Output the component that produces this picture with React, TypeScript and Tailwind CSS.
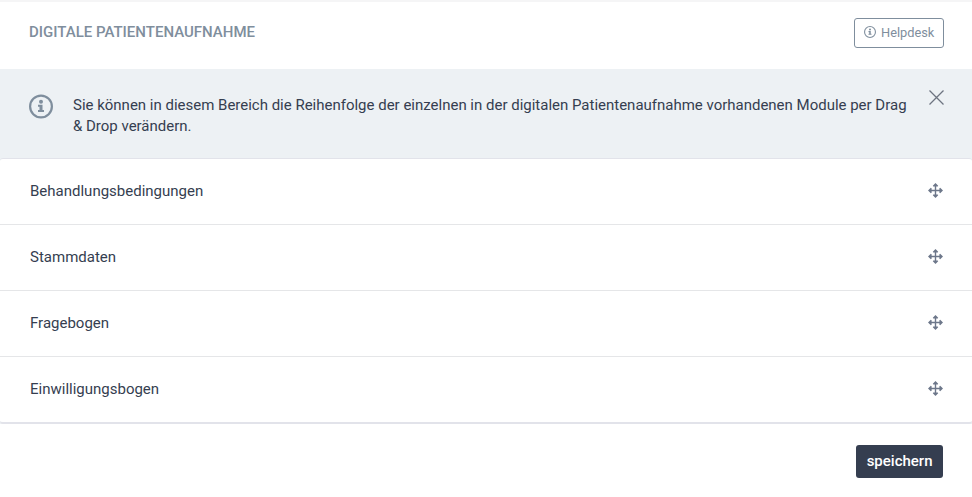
// Réglages du module « Digitale Patientenaufnahme » : liste des modules
// réordonnables par glisser-déposer, bandeau d'aide et bouton de sauvegarde.

import { useState } from 'react'

const MODULES = ['Behandlungsbedingungen', 'Stammdaten', 'Fragebogen', 'Einwilligungsbogen']

// « i » cerclé, avec empattements.
function InfoIcon({ className }: { className: string }) {
  return (
    <svg className={className} viewBox="0 0 24 24" fill="currentColor" aria-hidden="true">
      <circle cx="12" cy="12" r="10.9" fill="none" stroke="currentColor" strokeWidth="2.2" />
      <circle cx="12" cy="7.2" r="2" />
      <path d="M9 10.2h4.5v5.2h1.5v2.1H9v-2.1h1.5v-3.1H9z" />
    </svg>
  )
}

// Poignée de déplacement : quatre flèches.
function MoveIcon() {
  return (
    <svg className="size-[15px]" viewBox="0 0 15 15" fill="currentColor" aria-hidden="true">
      <path d="M6.8 2h1.4v11H6.8zM2 6.8h11v1.4H2z" />
      <path d="M7.5 0 10.2 2.8 9.7 3.6H5.3L4.8 2.8zM7.5 15l2.7-2.8-.5-.8H5.3l-.5.8zM0 7.5l2.8-2.7.8.5v4.4l-.8.5zM15 7.5l-2.8-2.7-.8.5v4.4l.8.5z" />
    </svg>
  )
}

export default function App() {
  const [modules, setModules] = useState(MODULES)
  const [dragged, setDragged] = useState<string | null>(null)
  const [showInfo, setShowInfo] = useState(true)

  // Insère le module déplacé à la place de celui sur lequel on le dépose.
  function drop(target: string) {
    if (!dragged || dragged === target) return
    const index = modules.indexOf(target)
    const next = modules.filter((m) => m !== dragged)
    next.splice(index, 0, dragged)
    setModules(next)
    setDragged(null)
  }

  return (
    <div className="h-[497px] border-t-2 border-[#f5f5f6] bg-white font-[Roboto,sans-serif] text-[15px] text-[#353e50]">
      <header className="flex h-[67px] items-start justify-between pt-4 pr-7 pl-[29px]">
        <h1 className="pt-[3px] leading-[22px] font-medium text-[#7f8e9d]">DIGITALE PATIENTENAUFNAHME</h1>
        <button className="flex h-[30px] w-[90px] items-center gap-[5px] rounded-[3px] border border-[#7f8e9d] pl-[9px] text-[12.8px] text-[#7f8e9d]">
          <InfoIcon className="mb-0.5 size-3" />
          Helpdesk
        </button>
      </header>

      <div className="bg-[#edf1f4]">
        {showInfo && (
          <div className="flex h-[89px] items-start pr-7 pl-[29px]">
            <InfoIcon className="mt-[25px] mr-5 h-[25px] w-6 shrink-0 text-[#7f8e9d]" />
            <p className="mt-[26px] flex-1 text-[14.99px] leading-[21px]">
              Sie können in diesem Bereich die Reihenfolge der einzelnen in der digitalen
              Patientenaufnahme vorhandenen Module per Drag<br />& Drop verändern.
            </p>
            <button className="mt-[21px]" aria-label="Schließen" onClick={() => setShowInfo(false)}>
              <svg className="size-[15px] text-[#6d7480]" viewBox="0 0 15 15" stroke="currentColor" strokeWidth="1.3">
                <path d="M.5.5l14 14M14.5.5l-14 14" />
              </svg>
            </button>
          </div>
        )}

        <ul className="rounded-[3px] border-t border-b-2 border-[#e2e3ea] bg-white">
          {modules.map((name) => (
            <li
              key={name}
              className="flex h-[66px] items-center justify-between border-b border-[#e5e6e8] pr-[29px] pb-px pl-[30px] last:h-[65px] last:border-b-0"
              draggable
              onDragStart={() => setDragged(name)}
              onDragOver={(e) => e.preventDefault()}
              onDrop={() => drop(name)}
            >
              <span>{name}</span>
              <span className="cursor-move pb-px text-[#6d778a]"><MoveIcon /></span>
            </li>
          ))}
        </ul>
      </div>

      <footer className="flex justify-end pt-[21px] pr-[29px]">
        <button className="h-[33px] rounded-[3px] bg-[#353e50] px-[10.5px] font-medium text-white">speichern</button>
      </footer>
    </div>
  )
}
